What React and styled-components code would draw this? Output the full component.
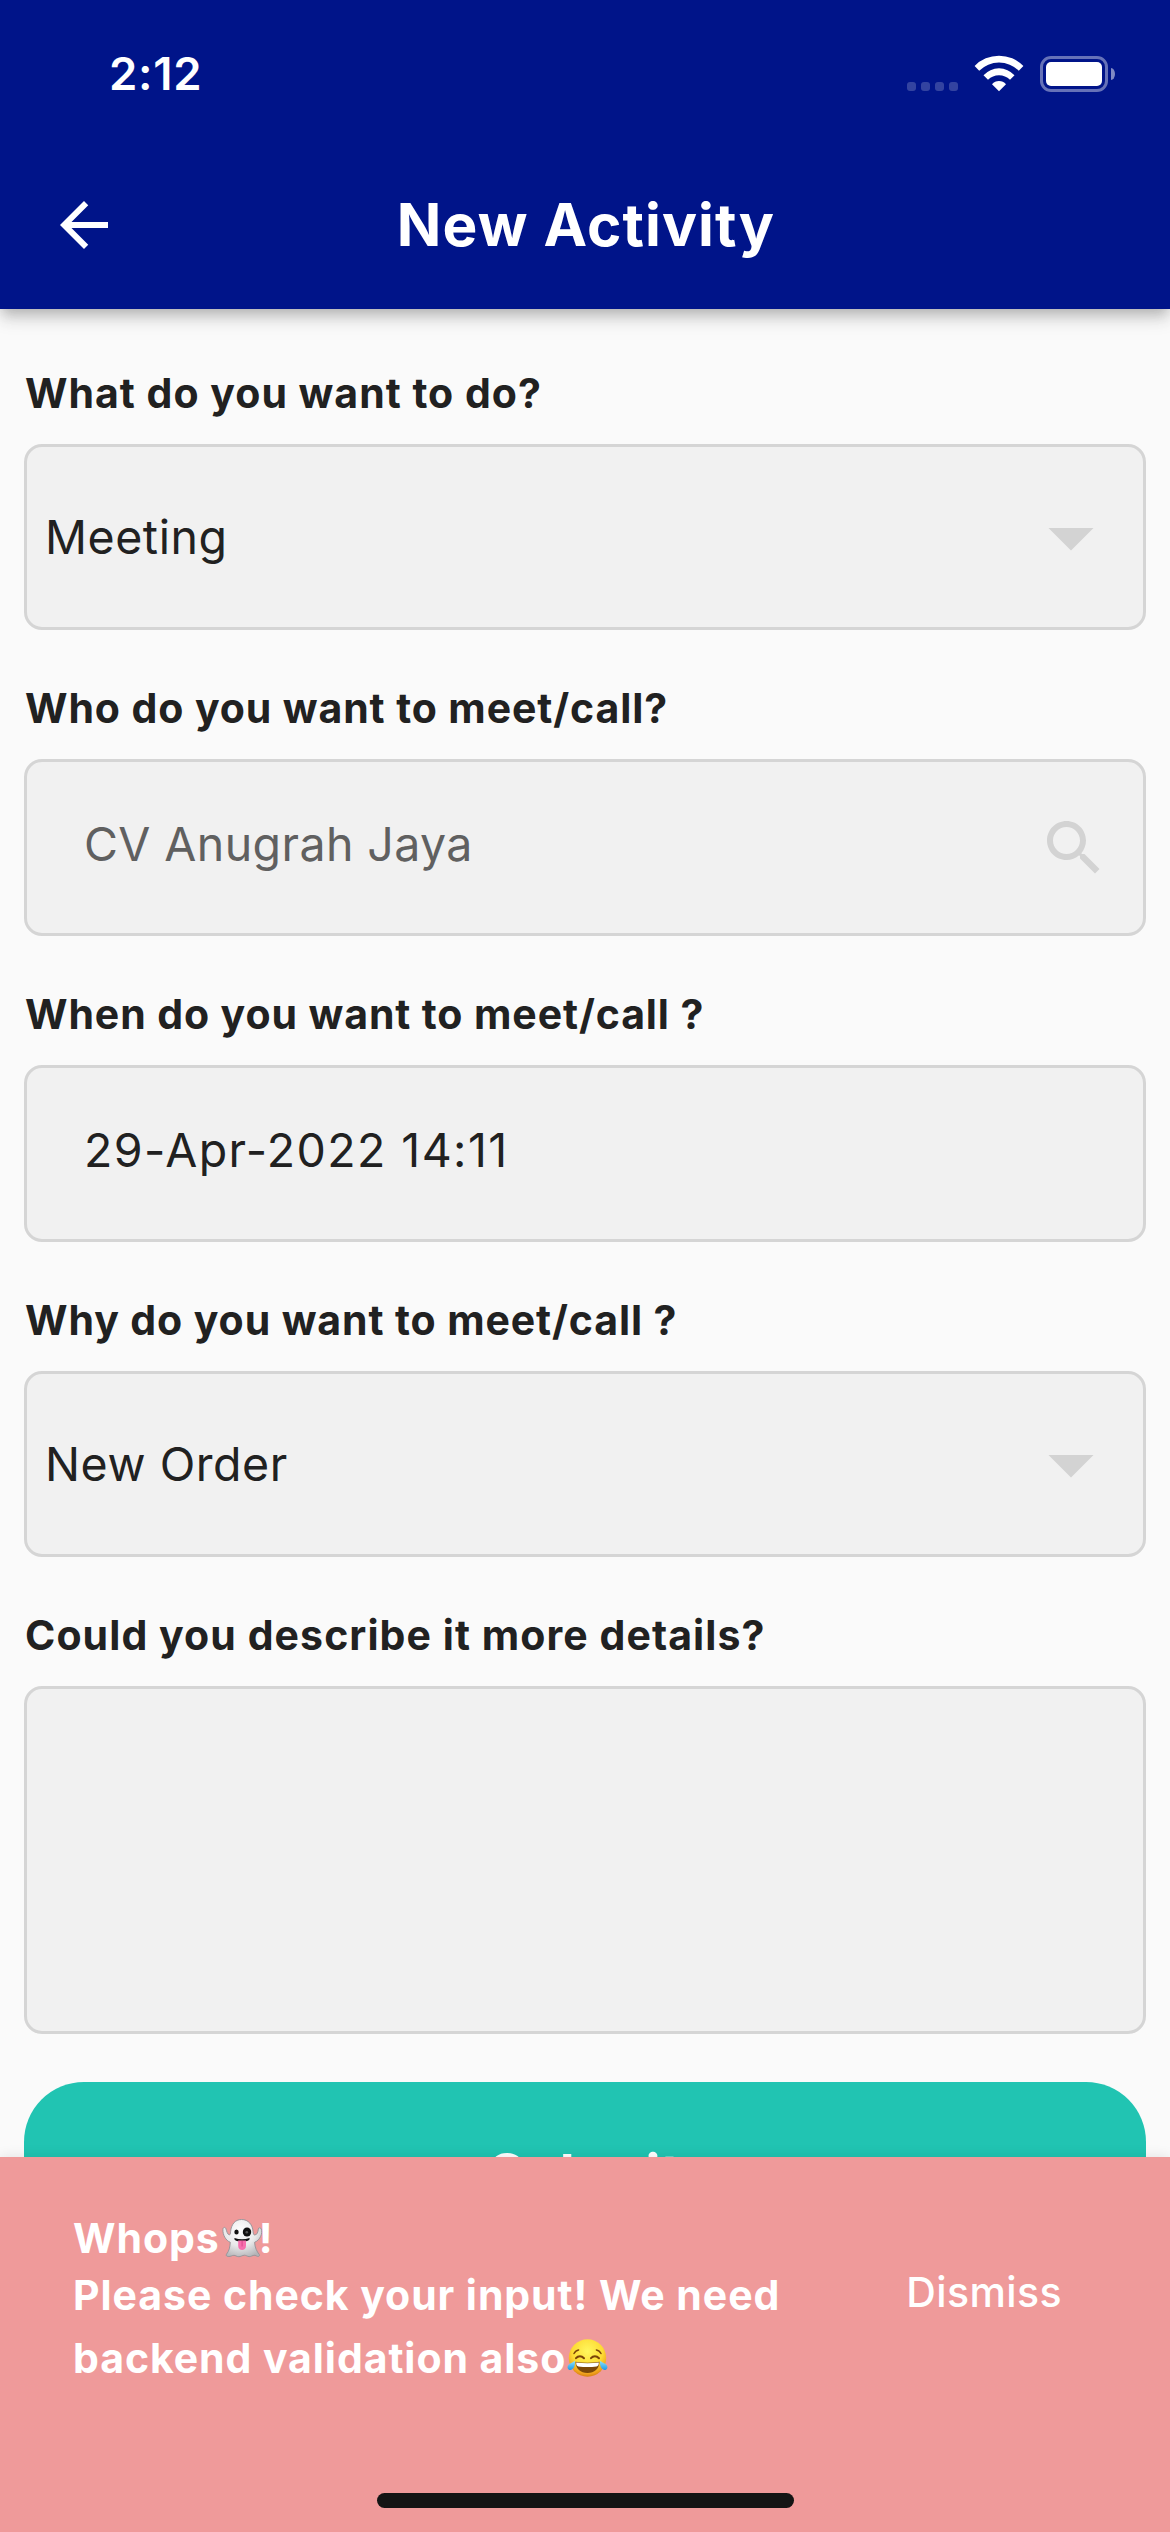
import React from "react";
import styled, { createGlobalStyle } from "styled-components";

const GlobalStyle = createGlobalStyle`
  *, *::before, *::after { box-sizing: border-box; }
  html, body { margin: 0; padding: 0; background: #fafafa; }
  body {
    font-family: Inter, "Liberation Sans", sans-serif;
    color: #212121;
    -webkit-font-smoothing: antialiased;
  }
  svg { display: block; flex: none; }
`;

const Screen = styled.div`
  position: relative;
  width: 1170px;
  height: 2532px;
  overflow: hidden;
  display: flex;
  flex-direction: column;
  background: #fafafa;
`;

const Header = styled.header`
  flex: none;
  height: 309px;
  background: #001489;
  color: #fff;
  box-shadow: 0 6px 12px -3px rgba(0, 0, 0, 0.2), 0 12px 15px 0 rgba(0, 0, 0, 0.1),
    0 3px 24px 0 rgba(0, 0, 0, 0.06);
`;

const StatusBar = styled.div`
  height: 141px;
  padding: 47px 55px 0 109px;
  display: flex;
  justify-content: space-between;
  align-items: flex-start;
`;

const Clock = styled.time`
  font-size: 45.5px;
  line-height: 54px;
  font-weight: 600;
  letter-spacing: 0.7px;
`;

const StatusIcons = styled.div`
  display: flex;
  padding-top: 8px;
`;

const SignalDots = styled.div`
  display: flex;
  gap: 5px;
  padding-top: 27px;
  margin-right: 16px;
`;

const Dot = styled.i`
  width: 9px;
  height: 9px;
  border-radius: 3px;
  background: rgba(255, 255, 255, 0.2);
`;

const Battery = styled.div`
  display: flex;
  align-items: center;
  gap: 3px;
  margin: 1px 0 0 16px;
  height: 36px;
`;

const BatteryShell = styled.div`
  width: 68px;
  height: 36px;
  padding: 3px;
  border: 3px solid rgba(255, 255, 255, 0.4);
  border-radius: 11px;
`;

const BatteryLevel = styled.div`
  height: 100%;
  border-radius: 5px;
  background: #fff;
`;

const BatteryCap = styled.div`
  width: 4px;
  height: 12px;
  border-radius: 0 4px 4px 0 / 0 6px 6px 0;
  background: rgba(255, 255, 255, 0.5);
`;

const TitleBar = styled.div`
  height: 168px;
  padding: 0 48px;
  display: grid;
  grid-template-columns: 72px 1fr 72px;
  align-items: center;
`;

const IconButton = styled.button`
  padding: 0;
  border: 0;
  background: none;
  color: inherit;
`;

const Title = styled.h1`
  margin: 0;
  padding-left: 2px;
  text-align: center;
  font-size: 58.5px;
  line-height: 72px;
  font-weight: 700;
  letter-spacing: 1.1px;
`;

const Form = styled.form`
  flex: none;
  display: flex;
  flex-direction: column;
  padding: 6px 24px 0;
`;

const Field = styled.div`
  display: flex;
  flex-direction: column;
  gap: 26px;
  padding-top: 53px;
`;

const Label = styled.label`
  padding-left: 1px;
  font-size: 41px;
  line-height: 50px;
  font-weight: 700;
  white-space: nowrap;
  letter-spacing: ${(p) => p.$tracking || "0.9px"};
`;

const Control = styled.div`
  display: flex;
  align-items: center;
  justify-content: space-between;
  border: 3px solid #d5d5d5;
  border-radius: 18px;
  background: #f1f1f1;
  color: #d3d3d3;
`;

const SelectBox = styled(Control)`
  height: 186px;
  padding: 0 18px;
`;

const InputBox = styled(Control)`
  height: 177px;
  padding: 0 33px 0 57px;
`;

const TextArea = styled(Control)`
  height: 348px;
`;

const Value = styled.span`
  font-size: 46.5px;
  line-height: 56px;
  white-space: nowrap;
  color: ${(p) => (p.$muted ? "#606060" : "#212121")};
  padding-bottom: ${(p) => p.$lift || "0"};
  letter-spacing: ${(p) => p.$tracking || "0.55px"};
`;

const SubmitButton = styled.button`
  margin-top: 48px;
  height: 183px;
  border: 0;
  border-radius: 60px;
  background: #21c4b2;
  color: #fff;
  font-family: inherit;
  font-size: 55px;
  font-weight: 700;
  line-height: 66px;
  letter-spacing: 0.4px;
`;

const Snackbar = styled.div`
  position: absolute;
  left: 0;
  right: 0;
  bottom: 0;
  height: 375px;
  padding: 56px 108px 0 73px;
  display: flex;
  flex-direction: column;
  justify-content: space-between;
  background: #ef9a9a;
  color: #fff;
  box-shadow: 0 -1px 12px rgba(0, 0, 0, 0.09);
`;

const SnackbarRow = styled.div`
  display: flex;
  justify-content: space-between;
  align-items: flex-start;
`;

const Message = styled.div`
  font-size: 41px;
  font-weight: 700;
  white-space: nowrap;
`;

const MessageLine = styled.div`
  display: flex;
  align-items: center;
  height: ${(p) => p.$height};
  letter-spacing: 0.93px;
`;

const EmojiSlot = styled.span`
  width: 40px;
  margin-left: -1px;
`;

const Dismiss = styled.button`
  margin-top: 54px;
  padding: 0;
  border: 0;
  background: none;
  color: inherit;
  font-family: inherit;
  font-size: 41px;
  line-height: 50px;
  font-weight: 500;
  letter-spacing: 0.4px;
`;

const HomeIndicator = styled.div`
  align-self: center;
  width: 417px;
  height: 15px;
  margin: 0 -35px 24px 0;
  border-radius: 8px;
  background: #141414;
`;

const WifiIcon = () => (
  <svg width="50" height="37" viewBox="974 55 50 37" fill="#fff">
    <path d="M974.6 66A34 34 0 0 1 1023.4 66L1018.8 70.8A28 28 0 0 0 979.2 70.8Z" />
    <path d="M983.5 75.2A21 21 0 0 1 1014.5 75.2L1010 79.8A15.6 15.6 0 0 0 988 79.8Z" />
    <path d="M992 84.2A9.5 9.5 0 0 1 1006 84.2L999 91.2Z" />
  </svg>
);

const BackIcon = () => (
  <svg width="72" height="72" viewBox="0 0 24 24" fill="currentColor">
    <path d="M20 11H7.83l5.59-5.59L12 4l-8 8 8 8 1.41-1.41L7.83 13H20v-2z" />
  </svg>
);

const DropDownIcon = () => (
  <svg width="108" height="108" viewBox="0 0 24 24" fill="currentColor">
    <path d="M7 10l5 5 5-5z" />
  </svg>
);

const SearchIcon = () => (
  <svg width="72" height="72" viewBox="0 0 24 24" fill="currentColor">
    <path d="M15.5 14h-.79l-.28-.27C15.41 12.59 16 11.11 16 9.5 16 5.91 13.09 3 9.5 3S3 5.91 3 9.5 5.91 16 9.5 16c1.61 0 3.09-.59 4.23-1.57l.27.28v.79l5 4.99L20.49 19l-4.99-5zm-6 0C7.01 14 5 11.99 5 9.5S7.01 5 9.5 5 14 7.01 14 9.5 11.99 14 9.5 14z" />
  </svg>
);

const GhostEmoji = () => (
  <svg width="46" height="42" viewBox="0 0 46 42" role="img" aria-label="👻">
    <defs>
      <radialGradient id="ghostBody" cx="0.45" cy="0.3" r="0.75">
        <stop offset="0" stopColor="#ffffff" />
        <stop offset="0.55" stopColor="#e9e9ea" />
        <stop offset="1" stopColor="#b3b3b6" />
      </radialGradient>
    </defs>
    <path
      d="M22.5 2.5c6.800 0 11 5 11.600 12.200.2 2 .5 3.300 1.600 3.300 2.600 0 3.400-3.400 3.600-6 .2-1.700 2.400-1.500 3 0 1.400 4.500-.9 10.800-6.700 13.300.3 5.500 2.200 9 4.700 12.200.8 1.400-.6 2.300-2 1.800-1.700-.8-2.800-1.300-4.200-.8-2.300.9-3.400 1.500-5.300.8-1.900-.7-2.700-1.500-4.900-.8-2.300.8-3.300 1.600-5.500 1-1.800-.6-2.800-1.600-4.700-1-2.200.8-3.300 1.300-5.200.9-1.300-.4-1.600-1.200-.9-2.300 2.500-3.300 3.300-6.500 3.700-11.800C6.800 23.500 3.600 18 3.900 12.300c.1-2.200 2.300-2.500 3-.7.8 2.800 1.600 6 3.400 6.200 1 .1 1.200-1.500 1.300-3.100C12.200 7.500 16 2.500 22.500 2.500z"
      fill="url(#ghostBody)"
      stroke="#929297"
      strokeWidth="0.9"
    />
    <ellipse cx="17.500" cy="15" rx="2.200" ry="2.600" fill="#111" />
    <ellipse cx="28" cy="15" rx="4.200" ry="4.500" fill="#111" />
    <circle cx="27.800" cy="15.200" r="1.300" fill="#555" />
    <path d="M15.500 21c4.800 1.600 10.200 1.600 15 0 .6 2.200-1.500 3.600-7.500 3.600s-8.100-1.400-7.500-3.600z" fill="#151515" />
    <path d="M19.200 23.400h7.800v5.300c0 5.800-7.800 5.800-7.800 0z" fill="#f76fae" />
    <path d="M23.100 24v5.500" stroke="#d9478c" strokeWidth="1" />
  </svg>
);

const JoyEmoji = () => (
  <svg width="46" height="42" viewBox="0 0 46 42" role="img" aria-label="😂">
    <defs>
      <radialGradient id="joyFace" cx="0.5" cy="0.32" r="0.68">
        <stop offset="0" stopColor="#fff75e" />
        <stop offset="0.6" stopColor="#fddb34" />
        <stop offset="0.88" stopColor="#f0a31d" />
        <stop offset="1" stopColor="#d97f12" />
      </radialGradient>
      <linearGradient id="joyTear" x1="0" y1="0" x2="0" y2="1">
        <stop offset="0" stopColor="#8fe3fb" />
        <stop offset="1" stopColor="#1e9be8" />
      </linearGradient>
    </defs>
    <circle cx="22.500" cy="21" r="18.700" fill="url(#joyFace)" />
    <g fill="none" stroke="#7a4308" strokeLinecap="round">
      <path d="M9 16.500c1-2 2.700-3.300 4.600-3.600M36 16.500c-1-2-2.700-3.300-4.600-3.600" strokeWidth="1.500" />
      <path d="M11 21.200c2.200-2.600 5.500-2.600 8 0M26 21.200c2.200-2.600 5.500-2.600 8 0" strokeWidth="2" />
    </g>
    <path d="M10.500 24.700c8 1.300 16 1.300 24 0-.3 7.200-5 11.300-12 11.300s-11.700-4.100-12-11.300z" fill="#7b4708" />
    <path d="M11.200 25.400c7.600 1.100 15 1.100 22.600 0 .2 2.200-.7 3.700-2.300 4-6 .7-12 .7-18 0-1.600-.3-2.500-1.800-2.300-4z" fill="#fff" />
    <path d="M9.800 23.700c.7 4.300-.8 8.600-4.200 9.200-2.700.3-4-2.800-2.200-5 1.500-1.800 4.300-2.200 6.400-4.200z" fill="url(#joyTear)" />
    <path d="M35.200 23.700c-.7 4.300.8 8.600 4.200 9.200 2.700.3 4-2.800 2.200-5-1.500-1.800-4.300-2.200-6.400-4.200z" fill="url(#joyTear)" />
  </svg>
);

export default function App() {
  return (
    <>
      <GlobalStyle />
      <Screen>
        <Header>
          <StatusBar>
            <Clock>2:12</Clock>
            <StatusIcons>
              <SignalDots>
                <Dot />
                <Dot />
                <Dot />
                <Dot />
              </SignalDots>
              <WifiIcon />
              <Battery>
                <BatteryShell>
                  <BatteryLevel />
                </BatteryShell>
                <BatteryCap />
              </Battery>
            </StatusIcons>
          </StatusBar>
          <TitleBar>
            <IconButton type="button" aria-label="Back">
              <BackIcon />
            </IconButton>
            <Title>New Activity</Title>
          </TitleBar>
        </Header>

        <Form>
          <Field>
            <Label $tracking="1.0px">What do you want to do?</Label>
            <SelectBox>
              <Value>Meeting</Value>
              <DropDownIcon />
            </SelectBox>
          </Field>
          <Field>
            <Label>Who do you want to meet/call?</Label>
            <InputBox>
              <Value $muted $lift="7px" $tracking="0.4px">CV Anugrah Jaya</Value>
              <SearchIcon />
            </InputBox>
          </Field>
          <Field>
            <Label>When do you want to meet/call ?</Label>
            <InputBox>
              <Value $lift="7px" $tracking="1.4px">29-Apr-2022 14:11</Value>
            </InputBox>
          </Field>
          <Field>
            <Label>Why do you want to meet/call ?</Label>
            <SelectBox>
              <Value>New Order</Value>
              <DropDownIcon />
            </SelectBox>
          </Field>
          <Field>
            <Label $tracking="1.07px">Could you describe it more details?</Label>
            <TextArea />
          </Field>
          <SubmitButton type="button">Submit</SubmitButton>
        </Form>

        <Snackbar>
          <SnackbarRow>
            <Message>
              <MessageLine $height="50px">
                Whops
                <EmojiSlot>
                  <GhostEmoji />
                </EmojiSlot>
                !
              </MessageLine>
              <MessageLine $height="63px">Please check your input! We need</MessageLine>
              <MessageLine $height="63px">
                backend validation also
                <EmojiSlot>
                  <JoyEmoji />
                </EmojiSlot>
              </MessageLine>
            </Message>
            <Dismiss type="button">Dismiss</Dismiss>
          </SnackbarRow>
          <HomeIndicator />
        </Snackbar>
      </Screen>
    </>
  );
}
